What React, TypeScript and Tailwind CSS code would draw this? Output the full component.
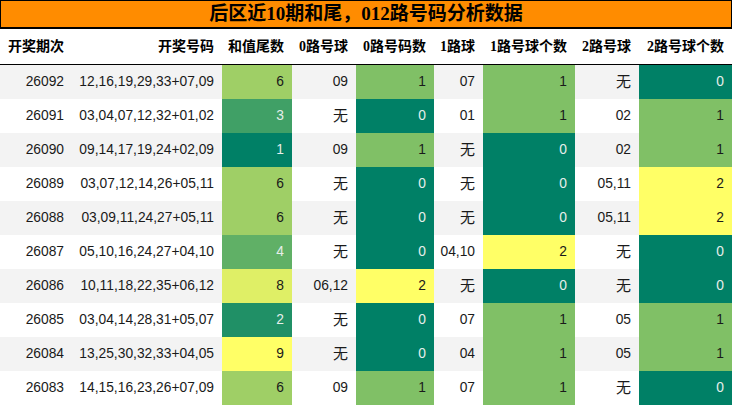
import React from "react"

type Row = {
  qi: string
  haoma: string
  wei: number
  r0: string
  c0: number
  r1: string
  c1: number
  r2: string
  c2: number
}

const rows: Row[] = [
  { qi: "26092", haoma: "12,16,19,29,33+07,09", wei: 6, r0: "09", c0: 1, r1: "07", c1: 1, r2: "无", c2: 0 },
  { qi: "26091", haoma: "03,04,07,12,32+01,02", wei: 3, r0: "无", c0: 0, r1: "01", c1: 1, r2: "02", c2: 1 },
  { qi: "26090", haoma: "09,14,17,19,24+02,09", wei: 1, r0: "09", c0: 1, r1: "无", c1: 0, r2: "02", c2: 1 },
  { qi: "26089", haoma: "03,07,12,14,26+05,11", wei: 6, r0: "无", c0: 0, r1: "无", c1: 0, r2: "05,11", c2: 2 },
  { qi: "26088", haoma: "03,09,11,24,27+05,11", wei: 6, r0: "无", c0: 0, r1: "无", c1: 0, r2: "05,11", c2: 2 },
  { qi: "26087", haoma: "05,10,16,24,27+04,10", wei: 4, r0: "无", c0: 0, r1: "04,10", c1: 2, r2: "无", c2: 0 },
  { qi: "26086", haoma: "10,11,18,22,35+06,12", wei: 8, r0: "06,12", c0: 2, r1: "无", c1: 0, r2: "无", c2: 0 },
  { qi: "26085", haoma: "03,04,14,28,31+05,07", wei: 2, r0: "无", c0: 0, r1: "07", c1: 1, r2: "05", c2: 1 },
  { qi: "26084", haoma: "13,25,30,32,33+04,05", wei: 9, r0: "无", c0: 0, r1: "04", c1: 1, r2: "05", c2: 1 },
  { qi: "26083", haoma: "14,15,16,23,26+07,09", wei: 6, r0: "09", c0: 1, r1: "07", c1: 1, r2: "无", c2: 0 },
]

// colour scale #008066 -> #ffff66
const weiColor: Record<number, string> = {
  1: "bg-[#008066] text-[#e6eeea]",
  2: "bg-[#209066] text-[#e6eeea]",
  3: "bg-[#40a066] text-[#e6eeea]",
  4: "bg-[#60b066] text-[#e6eeea]",
  5: "bg-[#80c066] text-[#1a1a1a]",
  6: "bg-[#9fcf66] text-[#1a1a1a]",
  7: "bg-[#bfdf66] text-[#1a1a1a]",
  8: "bg-[#dfef66] text-[#1a1a1a]",
  9: "bg-[#ffff66] text-[#1a1a1a]",
}

const countColor: Record<number, string> = {
  0: "bg-[#008066] text-[#e6eeea]",
  1: "bg-[#80c066] text-[#1a1a1a]",
  2: "bg-[#ffff66] text-[#1a1a1a]",
}

const headers = ["开奖期次", "开奖号码", "和值尾数", "0路号球", "0路号码数", "1路球", "1路号球个数", "2路号球", "2路号球个数"]

const cols = "grid grid-cols-[72px_150px_70px_64px_78px_49px_92px_64px_93px]"
const cell = "flex items-center justify-end pr-2 whitespace-nowrap"

function Ball({ v }: { v: string }) {
  if (v === "无") return <span className="text-[15px]">无</span>
  return <>{v}</>
}

export default function App() {
  return (
    <div className="w-[732px] h-[406px] bg-white overflow-hidden text-[#1a1a1a] font-['Liberation_Sans','Noto_Sans_CJK_SC',sans-serif]">
      <div className="h-[29px] bg-[#ff8c00] border border-black border-b-2 flex items-center justify-center font-['Liberation_Serif','Noto_Sans_CJK_SC',serif] font-bold text-[19px] text-black">
        后区近10期和尾，012路号码分析数据
      </div>
      <div className={`${cols} h-[36px] border-b border-black font-['Liberation_Serif','Noto_Sans_CJK_SC',serif] font-bold text-[14px] text-black`}>
        {headers.map((h, i) => (
          <div key={h} className={i === 0 ? "flex items-center pl-2" : cell}>
            {h}
          </div>
        ))}
      </div>
      {rows.map((r, i) => (
        <div key={r.qi} className={`${cols} h-[34px] text-[13.8px] ${i % 2 === 0 ? "bg-[#f3f3f3]" : "bg-white"}`}>
          <div className={cell}>{r.qi}</div>
          <div className={cell}>{r.haoma}</div>
          <div className={`${cell} ${weiColor[r.wei]}`}>{r.wei}</div>
          <div className={cell}><Ball v={r.r0} /></div>
          <div className={`${cell} ${countColor[r.c0]}`}>{r.c0}</div>
          <div className={cell}><Ball v={r.r1} /></div>
          <div className={`${cell} ${countColor[r.c1]}`}>{r.c1}</div>
          <div className={cell}><Ball v={r.r2} /></div>
          <div className={`${cell} ${countColor[r.c2]}`}>{r.c2}</div>
        </div>
      ))}
    </div>
  )
}
